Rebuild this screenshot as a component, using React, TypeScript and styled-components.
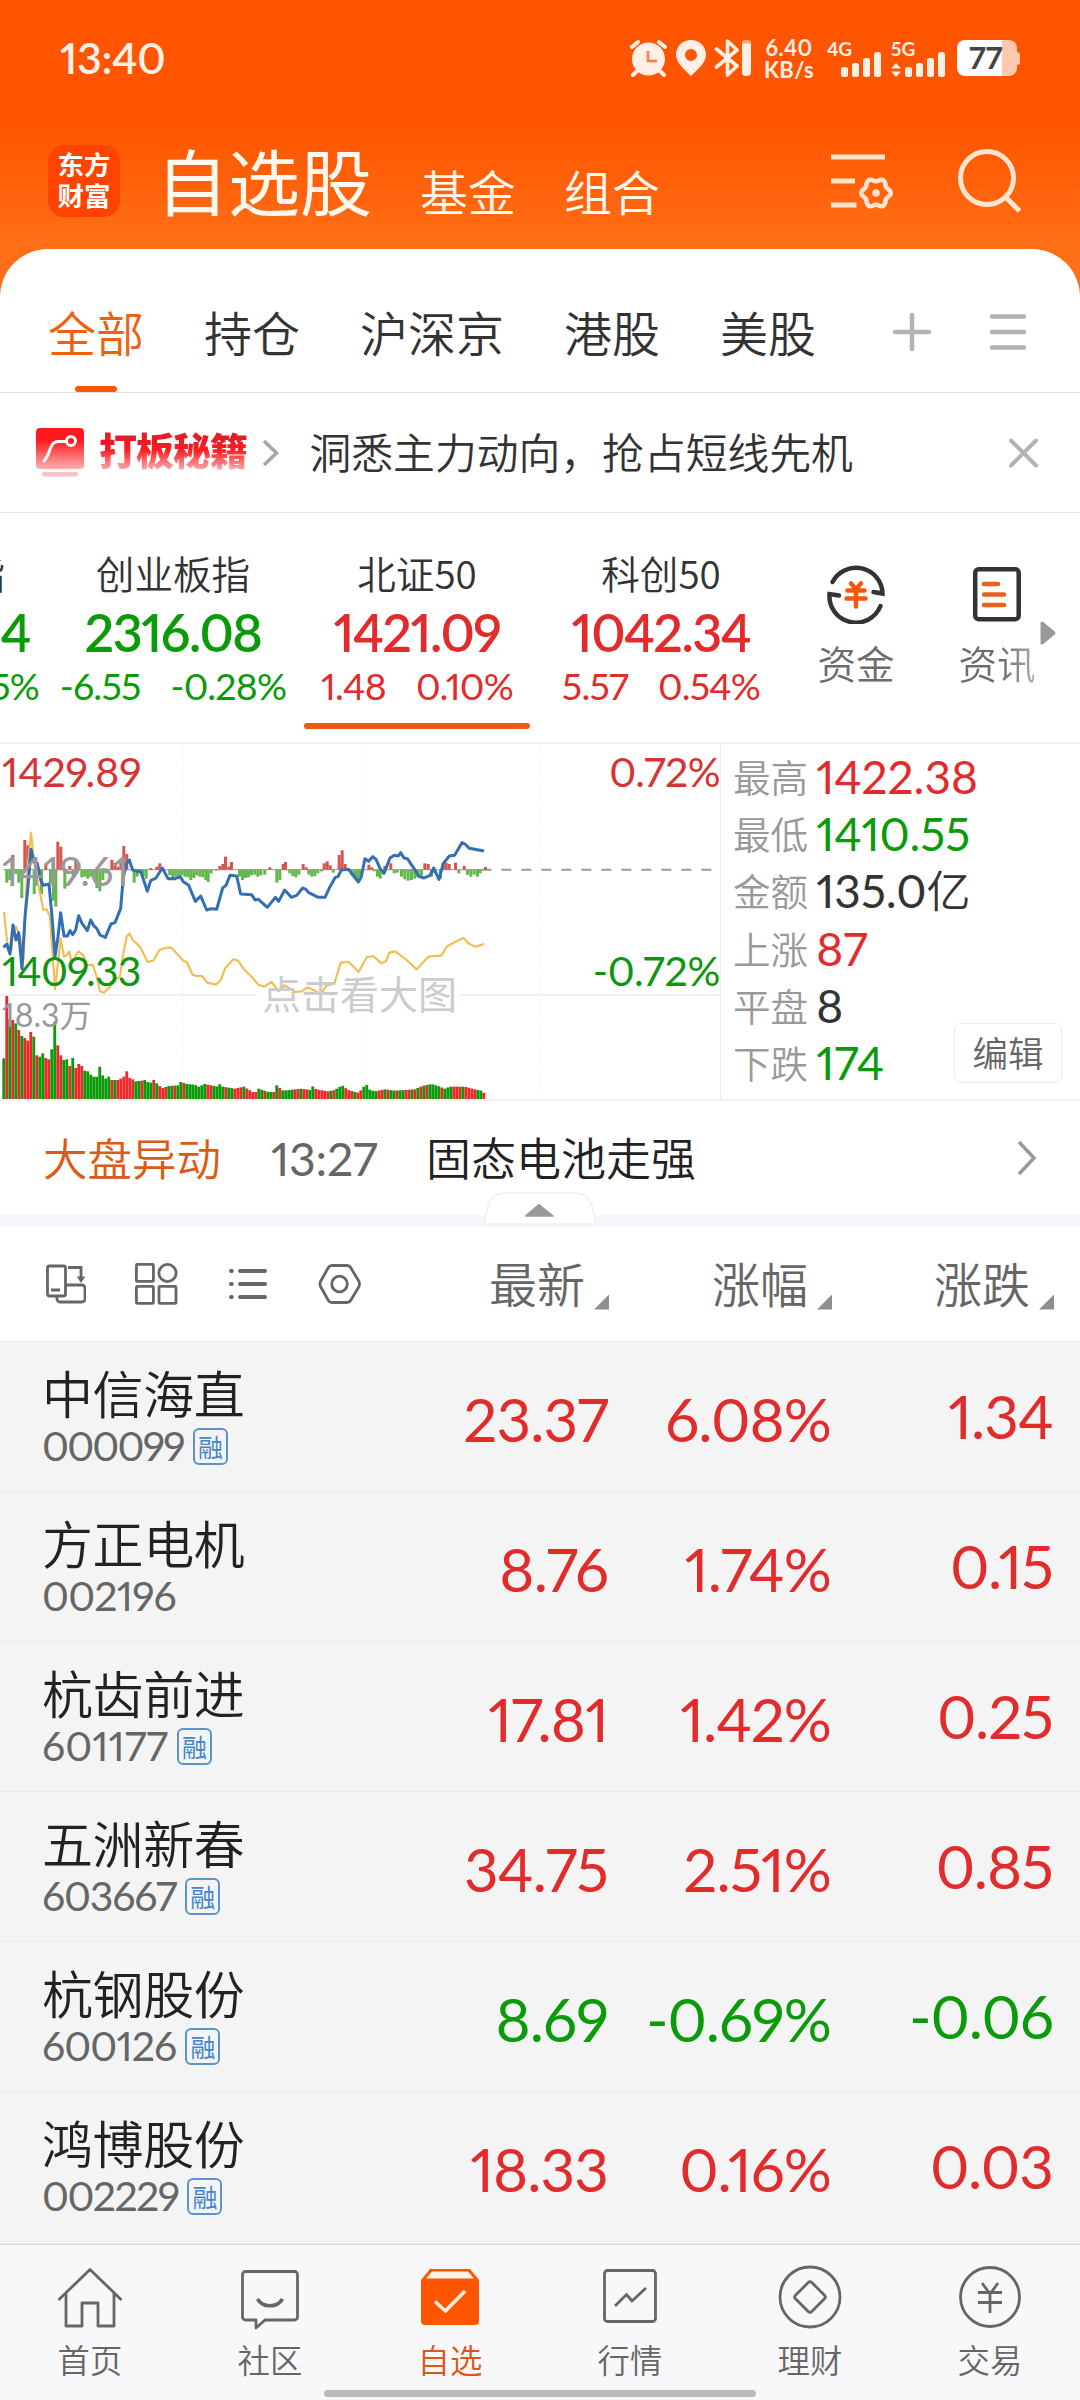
import React from "react";
import styled, { createGlobalStyle, css } from "styled-components";

const RED = "#e22b2b";
const GREEN = "#0a9a0a";
const ORANGE = "#ff5500";
const CJK = '"Noto Sans CJK SC", "Noto Sans", sans-serif';
const NUM = 'Lato, "Noto Sans CJK SC", sans-serif';

type Tone = "up" | "down" | "flat";
const toneColor: Record<Tone, string> = { up: RED, down: GREEN, flat: "#333" };

const Global = createGlobalStyle`
  html, body { margin: 0; padding: 0; background: #fff; }
  body { font-family: ${CJK}; font-weight: 350; color: #333; }
  * { box-sizing: border-box; }
  svg { display: block; flex: none; }
`;

const numeric = css`
  font-family: ${NUM};
  font-weight: 400;
  font-feature-settings: "pnum";
`;

const Screen = styled.div`
  width: 1080px;
  height: 2400px;
  overflow: hidden;
  display: flex;
  flex-direction: column;
  background: linear-gradient(180deg, ${ORANGE} 0, ${ORANGE} 128px, #ff6f17 245px, #ff6f17 320px, #fff 321px);
`;

/* ---------- status bar ---------- */

const StatusBar = styled.div`
  height: 116px;
  flex: none;
  padding: 0 60px 0 60px;
  display: flex;
  align-items: center;
  color: #ffefe6;
`;
const Clock = styled.div`
  ${numeric}
  font-size: 43px;
  font-weight: 600;
  line-height: 60px;
  letter-spacing: -0.4px;
  margin-right: auto;
  padding-bottom: 1px;
`;
const NetSpeed = styled.div`
  ${numeric}
  width: 50px;
  margin: 2px 0 0 12px;
  display: flex;
  flex-direction: column;
  align-items: center;
  font-size: 22px;
  font-weight: 700;
  line-height: 22px;
  letter-spacing: 0.4px;
  white-space: nowrap;
`;
const Signal = styled.div<{ $ml: number }>`
  ${numeric}
  position: relative;
  width: 56px;
  height: 37px;
  margin-left: ${(p) => p.$ml}px;
`;
const SignalTag = styled.span`
  position: absolute;
  left: 0;
  top: 0;
  font-size: 19px;
  font-weight: 700;
  line-height: 18px;
`;
const Battery = styled.div`
  display: flex;
  align-items: center;
  margin-left: 10px;
`;
const BatteryBody = styled.div`
  ${numeric}
  width: 60px;
  height: 36px;
  border-radius: 8px;
  background: linear-gradient(90deg, #fff 45px, #ffc8b0 45px);
  color: #444;
  font-size: 31px;
  font-weight: 700;
  line-height: 35px;
  padding-left: 12px;
`;
const BatteryNub = styled.div`
  width: 3px;
  height: 13px;
  border-radius: 0 3px 3px 0;
  background: #ffc8b0;
`;

/* ---------- app header ---------- */

const Header = styled.header`
  height: 133px;
  flex: none;
  padding: 0 59px 0 48px;
  display: flex;
  align-items: flex-start;
  color: #fff8ee;
`;
const Logo = styled.div`
  width: 72px;
  height: 72px;
  margin-top: 29px;
  border-radius: 16px;
  background: #ff4300;
  color: #fff;
  display: flex;
  flex-direction: column;
  align-items: center;
  padding-top: 3px;
  font-size: 26.5px;
  font-weight: 700;
  line-height: 31px;
`;
const Title = styled.h1`
  margin: 13px 0 0 36px;
  font-size: 72px;
  font-weight: 400;
  line-height: 100px;
`;
const HeaderLink = styled.a`
  margin: 44px 0 0 48px;
  font-size: 48px;
  font-weight: 350;
  line-height: 60px;
`;
const HeaderIcons = styled.div`
  margin: 32px 0 0 auto;
  display: flex;
  gap: 63px;
`;

/* ---------- sheet & tabs ---------- */

const Sheet = styled.main`
  flex: none;
  height: 1994px;
  background: #fff;
  border-radius: 48px 48px 0 0;
  overflow: hidden;
`;
const Tabs = styled.nav`
  height: 144px;
  padding: 0 53px 0 48px;
  display: flex;
  gap: 60px;
  border-bottom: 1px solid #e0e0e0;
`;
const Tab = styled.div<{ $active?: boolean }>`
  display: flex;
  flex-direction: column;
  align-items: center;
  height: 143px;
  padding-top: 52px;
  font-size: 48px;
  line-height: 60px;
  color: ${(p) => (p.$active ? "#f0600f" : "#333")};
  &::after {
    content: "";
    width: 42px;
    height: 6px;
    margin-top: auto;
    border-radius: 3px;
    background: ${(p) => (p.$active ? ORANGE : "transparent")};
  }
`;
const TabTools = styled.div`
  margin: 63px 0 0 auto;
  display: flex;
  gap: 57px;
`;

const Promo = styled.section`
  height: 120px;
  padding: 0 42px 0 36px;
  display: flex;
  align-items: center;
  border-bottom: 1px solid #e4e4e4;
`;
const PromoName = styled.b`
  margin: -7px 15px 0 15px;
  font-size: 38px;
  font-weight: 900;
  letter-spacing: -1px;
  line-height: 50px;
  background: linear-gradient(180deg, #e81c24 18px, #ff1c20 26px, #ffb4b4 47px);
  background-clip: text;
  -webkit-background-clip: text;
  color: transparent;
`;
const PromoText = styled.p`
  margin: -4px auto 0 29.5px;
  font-size: 41.8px;
  line-height: 60px;
`;

/* ---------- indices ---------- */

const Indices = styled.section`
  height: 229px;
  display: flex;
  overflow: hidden;
`;
const IndexCell = styled.div<{ $tone: Tone; $active?: boolean }>`
  width: 244px;
  flex: none;
  display: flex;
  flex-direction: column;
  align-items: center;
  color: ${(p) => toneColor[p.$tone]};
  white-space: nowrap;
  padding-top: 34px;
  &::after {
    content: "";
    width: 226px;
    height: 6px;
    margin-top: 13px;
    border-radius: 3px;
    background: ${(p) => (p.$active ? "#ee5a10" : "transparent")};
  }
`;
const ClippedCell = styled(IndexCell)`
  width: 51px;
  align-items: flex-end;
  padding-right: 12px;
`;
const IndexName = styled.div<{ $shift?: number }>`
  font-size: 38.6px;
  line-height: 50px;
  color: #333;
  margin-right: ${(p) => p.$shift ?? 0}px;
`;
const IndexValue = styled.div<{ $shift?: number }>`
  ${numeric}
  font-size: 52px;
  font-weight: 600;
  line-height: 64px;
  letter-spacing: -1.5px;
  margin-top: 3px;
  margin-right: ${(p) => p.$shift ?? 0}px;
`;
const IndexDelta = styled.div`
  ${numeric}
  display: flex;
  gap: 30px;
  font-size: 37.5px;
  line-height: 48px;
  letter-spacing: -0.8px;
  margin-top: -2px;
`;
const Shortcut = styled.div<{ $ml: number }>`
  display: flex;
  flex-direction: column;
  align-items: center;
  width: 78px;
  margin-left: ${(p) => p.$ml}px;
  padding-top: 51px;
  font-size: 38.6px;
  line-height: 50px;
  color: #6c6c6c;
`;
const ShortcutText = styled.span<{ $fade?: boolean }>`
  margin-top: 13px;
  ${(p) =>
    p.$fade &&
    css`
      background: linear-gradient(90deg, #6c6c6c 55%, #b0b0b0 100%);
      background-clip: text;
      -webkit-background-clip: text;
      color: transparent;
    `}
`;
const MoreArrow = styled.div`
  padding-top: 107px;
  margin-left: 4px;
`;

/* ---------- chart panel ---------- */

const Panel = styled.section`
  height: 359px;
  display: flex;
  border-top: 2px solid #f1f1f1;
  border-bottom: 2px solid #f1f1f1;
`;
const ChartBox = styled.div`
  position: relative;
  width: 721px;
  height: 355px;
  border-right: 1px solid #ececec;
`;
const ChartLabel = styled.span<{ $top: number; $right?: boolean; $color: string; $size?: number; $track?: number }>`
  ${numeric}
  position: absolute;
  top: ${(p) => p.$top}px;
  ${(p) => (p.$right ? "right: 0;" : "left: 2px;")}
  font-size: ${(p) => p.$size ?? 41}px;
  letter-spacing: ${(p) => p.$track ?? 0}px;
  line-height: 48px;
  color: ${(p) => p.$color};
`;
const ChartHint = styled.span`
  position: absolute;
  left: 258px;
  top: 222px;
  padding: 0 4px;
  font-size: 39px;
  line-height: 52px;
  font-weight: 400;
  color: #ccc;
`;
const Stats = styled.div`
  position: relative;
  flex: 1;
  padding: 4px 0 0 12px;
`;
const Stat = styled.div<{ $tone: Tone }>`
  height: 57.3px;
  display: flex;
  align-items: center;
  gap: 8px;
  color: ${(p) => toneColor[p.$tone]};
`;
const StatLabel = styled.span`
  font-size: 37.6px;
  line-height: 50px;
  color: #999;
  margin-top: -2px;
`;
const StatValue = styled.span`
  ${numeric}
  font-size: 46px;
  line-height: 56px;
  white-space: nowrap;
`;
const Unit = styled.span`
  font-family: ${CJK};
  font-weight: 350;
  font-size: 44px;
  line-height: 40px;
`;
const EditButton = styled.button`
  position: absolute;
  right: 18px;
  bottom: 16px;
  width: 108px;
  height: 60px;
  padding: 0 0 3px;
  border: 1px solid #ebebeb;
  border-radius: 7px;
  background: #fff;
  font-family: ${CJK};
  font-weight: 350;
  font-size: 35.5px;
  line-height: 50px;
  color: #666;
`;

/* ---------- news line ---------- */

const News = styled.section`
  position: relative;
  height: 114px;
  padding: 0 43px 0 43px;
  display: flex;
  align-items: center;
  font-size: 45px;
  line-height: 60px;
`;
const NewsTag = styled.span`
  width: 178px;
  font-size: 44.5px;
  color: #dc5a12;
  margin-top: -2px;
`;
const NewsTime = styled.span`
  ${numeric}
  font-size: 46.5px;
  letter-spacing: -0.3px;
  width: 107px;
  margin: -1px 0 0 50px;
  color: #666;
`;
const NewsText = styled.span`
  margin: -3px auto 0 48px;
  color: #222;
`;
const Band = styled.div`
  height: 12px;
  background: #f5f7fa;
`;
const Handle = styled.div`
  position: absolute;
  left: 483px;
  top: 91px;
`;

/* ---------- list ---------- */

const grid = css`
  display: grid;
  grid-template-columns: 343px 223px 223px 222px;
  padding-left: 42px;
`;
const ListHead = styled.div`
  ${grid}
  height: 115px;
  align-items: center;
  border-bottom: 1px solid #ebebeb;
`;
const ViewIcons = styled.div`
  display: flex;
  align-items: center;
  gap: 48px;
`;
const ColHead = styled.div`
  display: flex;
  justify-content: flex-end;
  gap: 9px;
  margin: -5px -1px 0 0;
  font-size: 48px;
  line-height: 60px;
  color: #666;
`;
const SortMark = styled.i`
  width: 15px;
  height: 15px;
  margin-top: 43px;
  background: #8e8e93;
  clip-path: polygon(100% 0, 100% 100%, 0 100%);
`;
const StockRow = styled.div<{ $tone: Tone }>`
  ${grid}
  height: 150px;
  background: #f4f4f4;
  border-bottom: 1px solid #eaeaea;
  color: ${(p) => toneColor[p.$tone]};
`;
const StockName = styled.div`
  margin-top: 15px;
  font-size: 51px;
  line-height: 70px;
  color: #222;
  letter-spacing: -0.4px;
`;
const StockCode = styled.div<{ $track: number }>`
  ${numeric}
  display: flex;
  align-items: center;
  gap: 9px;
  margin-top: -2px;
  font-size: 41px;
  line-height: 42px;
  letter-spacing: ${(p) => p.$track}px;
  color: #666;
`;
const Badge = styled.span`
  width: 35px;
  height: 37px;
  border: 2px solid #5c93cc;
  border-radius: 6px;
  font-family: ${CJK};
  font-size: 25px;
  line-height: 32px;
  letter-spacing: 0;
  text-align: center;
  color: #4586c8;
`;
const Figure = styled.div<{ $top: number }>`
  ${numeric}
  padding-top: ${(p) => p.$top}px;
  font-size: 60px;
  line-height: 72px;
  letter-spacing: -0.9px;
  text-align: right;
  white-space: nowrap;
`;

/* ---------- bottom bar ---------- */

const BottomBar = styled.footer`
  position: relative;
  flex: none;
  height: 157px;
  background: #f8f8fb;
  border-top: 2px solid #dedede;
  display: flex;
`;
const NavItem = styled.div<{ $active?: boolean }>`
  width: 180px;
  display: flex;
  flex-direction: column;
  align-items: center;
  padding-top: 19px;
  font-size: 32.4px;
  line-height: 44px;
  color: ${(p) => (p.$active ? "#d8571a" : "#666")};
`;
const NavText = styled.span`
  margin-top: 7px;
`;
const HomeIndicator = styled.div`
  position: absolute;
  left: 324px;
  bottom: 3px;
  width: 432px;
  height: 7px;
  border-radius: 4px;
  background: #bababa;
`;

/* ---------- data ---------- */

const PRICE =
  "10,652 20,643 30,672 39,585 48,630 56,608 66,716 75,560 84,470 93,358 102,395 112,400 122,450 130,466 147,462 156,560 165,680 174,620 182,548 192,618 202,618 210,602 218,614 227,600 236,557 246,580 262,602 272,570 282,588 290,595 300,615 316,622 333,582 345,578 362,535 370,440 380,400 388,390 398,420 412,424 422,424 442,484 452,452 468,444 487,414 504,446 525,446 541,440 550,455 566,466 586,514 602,498 620,540 634,536 650,538 668,474 678,466 690,436 710,438 722,492 755,494 765,510 775,508 802,532 826,502 836,514 854,480 874,502 890,496 908,474 918,478 926,488 955,502 975,502 990,470 1006,442 1014,440 1024,420 1046,418 1075,456 1084,440 1095,386 1106,394 1118,380 1128,388 1140,415 1152,430 1170,384 1183,376 1195,378 1202,368 1212,384 1222,386 1248,424 1255,438 1272,444 1290,436 1301,414 1317,448 1330,400 1348,378 1364,376 1386,338 1395,342 1408,355 1452,363";
const AVERAGE =
  "12,546 22,640 34,660 40,600 48,590 60,620 70,690 80,450 93,308 103,400 120,490 130,540 140,538 150,560 165,778 182,625 192,680 200,676 208,664 215,700 235,664 250,676 262,706 278,704 290,740 300,784 312,788 330,770 345,748 360,740 368,680 380,620 388,610 398,630 420,650 443,696 460,692 478,660 495,654 513,652 550,692 560,696 578,734 590,738 606,738 622,758 648,764 662,750 676,714 700,688 714,692 730,716 755,740 775,764 793,770 815,756 836,784 854,766 885,786 905,784 922,772 945,782 962,794 980,766 1003,760 1022,698 1046,696 1076,726 1100,682 1120,678 1144,700 1158,694 1168,668 1186,664 1220,690 1250,718 1285,680 1325,676 1340,650 1365,636 1390,624 1405,640 1425,650 1452,642";
const BASE = 419;
const INFLOW: number[][] = [[34,375],[70,330],[79,346],[133,402],[169,335],[178,350],[205,408],[223,392],[232,400],[331,390],[340,398],[349,410],[358,398],[367,348],[376,372],[448,414],[466,410],[475,400],[655,408],[664,402],[672,380],[682,410],[690,396],[805,412],[845,402],[852,396],[905,402],[914,412],[968,400],[977,394],[986,406],[1013,375],[1022,361],[1031,402],[1102,404],[1111,412],[1150,408],[1168,400],[1270,400],[1280,402],[1325,400],[1334,398],[1343,402],[1362,398],[1388,408],[1452,411]];
const OUTFLOW: number[][] = [[16,458],[25,450],[43,432],[52,458],[61,504],[98,492],[120,492],[147,460],[156,512],[163,530],[190,476],[215,440],[241,442],[250,440],[259,446],[268,440],[277,448],[286,474],[295,484],[304,450],[313,430],[398,458],[407,440],[416,430],[425,438],[434,446],[505,436],[514,446],[523,440],[532,446],[541,436],[550,440],[559,442],[568,450],[577,444],[586,436],[595,440],[604,442],[613,450],[620,456],[629,430],[645,422],[714,440],[723,450],[732,444],[741,442],[750,436],[760,434],[769,440],[778,436],[790,434],[826,458],[835,450],[865,430],[874,438],[883,442],[892,434],[922,434],[931,440],[940,438],[949,430],[960,424],[995,428],[1040,424],[1050,436],[1060,446],[1068,450],[1077,440],[1118,424],[1128,440],[1136,446],[1145,432],[1178,430],[1187,428],[1200,440],[1210,448],[1220,452],[1230,450],[1240,446],[1250,440],[1260,436],[1290,440],[1300,430],[1317,446],[1372,430],[1398,434],[1408,440],[1418,434],[1428,440],[1436,430]];
const VOLUME: number[][] = [[7,985],[16,798],[25,868],[34,870],[43,880],[52,900],[61,918],[70,924],[79,932],[88,906],[97,920],[106,976],[115,980],[124,970],[133,984],[142,988],[151,958],[160,875],[169,946],[178,976],[187,990],[196,988],[205,1008],[214,984],[223,1014],[232,1002],[241,1008],[250,1022],[259,1024],[268,1034],[277,1040],[286,1040],[295,1010],[304,1036],[313,1046],[322,1040],[331,1050],[349,1050],[358,1046],[367,1040],[376,1024],[385,1044],[394,1048],[403,1054],[421,1052],[430,1050],[439,1056],[448,1058],[457,1050],[466,1060],[475,1068],[484,1074],[502,1068],[529,1066],[538,1056],[556,1062],[580,1064],[592,1070],[610,1062],[630,1066],[645,1070],[654,1062],[664,1070],[700,1076],[727,1070],[754,1086],[763,1086],[772,1076],[800,1086],[818,1086],[826,1066],[845,1082],[900,1076],[926,1080],[935,1068],[944,1078],[980,1084],[1000,1080],[1022,1066],[1040,1080],[1070,1088],[1084,1076],[1093,1058],[1102,1078],[1120,1084],[1150,1078],[1180,1082],[1240,1078],[1262,1068],[1290,1062],[1310,1068],[1330,1076],[1345,1070],[1390,1070],[1420,1078],[1440,1082],[1456,1096]];
const VOLUME_SIDE =
  "grgrgrgrrrgrggrrggrrggrgrrrgggggggggrgrrrrrrggrgggrgrrrggrggrgggggggrrggggrggrrrgrrrrggrggrgrggggrrgrrggrrrrrgrgggrrrgrrgggggrrgrggrggrrgrgrgrggggrgggrrrgrrrrggrgrgr";

function topAt(x: number) {
  const i = VOLUME.findIndex((p) => p[0] >= x);
  if (i <= 0) return VOLUME[Math.max(i, 0)][1];
  const [x0, y0] = VOLUME[i - 1];
  const [x1, y1] = VOLUME[i];
  return y0 + ((y1 - y0) * (x - x0)) / (x1 - x0);
}

const VOLUME_BARS = Array.from({ length: 161 }, (_, i) => {
  const x = 7 + i * 9;
  return { x, y: topAt(x), up: VOLUME_SIDE[i % VOLUME_SIDE.length] === "r" };
});

const STATS: [string, string, Tone, string?][] = [
  ["最高", "1422.38", "up"],
  ["最低", "1410.55", "down"],
  ["金额", "135.0", "flat", "亿"],
  ["上涨", "87", "up"],
  ["平盘", "8", "flat"],
  ["下跌", "174", "down"],
];

type Stock = {
  name: string;
  code: string;
  track: number;
  margin: boolean;
  price: string;
  pct: string;
  diff: string;
  tone: Tone;
};
const STOCKS: Stock[] = [
  { name: "中信海直", code: "000099", track: -1.8, margin: true, price: "23.37", pct: "6.08%", diff: "1.34", tone: "up" },
  { name: "方正电机", code: "002196", track: -0.8, margin: false, price: "8.76", pct: "1.74%", diff: "0.15", tone: "up" },
  { name: "杭齿前进", code: "601177", track: 0, margin: true, price: "17.81", pct: "1.42%", diff: "0.25", tone: "up" },
  { name: "五洲新春", code: "603667", track: -1.2, margin: true, price: "34.75", pct: "2.51%", diff: "0.85", tone: "up" },
  { name: "杭钢股份", code: "600126", track: -0.9, margin: true, price: "8.69", pct: "-0.69%", diff: "-0.06", tone: "down" },
  { name: "鸿博股份", code: "002229", track: -1.6, margin: true, price: "18.33", pct: "0.16%", diff: "0.03", tone: "up" },
];

/* ---------- drawings ---------- */

const StatusIcons = () => (
  <svg width="122" height="38" viewBox="631 39 122 38" fill="#ffefe6">
    <circle cx="649.5" cy="59" r="16.5" />
    <path d="M633 47l6-5M660 42l6 5M638 71l-4 4M661 71l4 4" stroke="#ffefe6" strokeWidth="4" strokeLinecap="round" />
    <path d="M649 51v10h9" fill="none" stroke="#ff7a3d" strokeWidth="2.6" />
    <path d="M692 40c-8.500 0-15 6.500-15 14.600 0 9 9 15.400 15 21.400 6-6 15-12.400 15-21.400 0-8.100-6.500-14.600-15-14.600zm0 9a6 6 0 1 1 0 12 6 6 0 0 1 0-12z" fillRule="evenodd" />
    <path d="M717.500 49l20.500 17-9.500 9V41l9.500 9-20.500 17" fill="none" stroke="#ffefe6" strokeWidth="3.600" strokeLinejoin="round" strokeLinecap="round" />
    <rect x="743" y="40" width="9" height="36" rx="4" />
    <path d="M743 43.500c0-5 9-5 9 0z" fill="#ffa57a" />
  </svg>
);

const Bars = ({ arrows }: { arrows?: boolean }) => (
  <svg width="56" height="37" viewBox="0 0 56 37" fill="#ffefe6">
    {arrows && <path d="M5 23l5 5.500H0zM5 37l5-5.500H0z" />}
    {[27, 23, 18, 12].map((y, i) => (
      <rect key={y} x={14 + i * 11} y={y} width="7" height={37 - y} rx="2.500" />
    ))}
  </svg>
);

const gear = (() => {
  const pts: string[] = [];
  for (let a = 0; a <= 360; a += 4) {
    const t = (a * Math.PI) / 180;
    const r = 13.2 + 1.5 * Math.cos(6 * t);
    pts.push(`${(876 + r * Math.cos(t)).toFixed(1)},${(193 + r * Math.sin(t)).toFixed(1)}`);
  }
  return pts.join(" ");
})();

const ManageIcon = () => (
  <svg width="64" height="66" viewBox="830 148 64 66" fill="none" stroke="#ffe4cf" strokeWidth="5">
    <path d="M831 157h54M831 181h24M831 205h25.500" />
    <polygon points={gear} strokeWidth="4.500" strokeLinejoin="round" />
    <circle cx="876" cy="193" r="3.800" fill="#ffe4cf" stroke="none" />
  </svg>
);

const SearchIcon = () => (
  <svg width="64" height="66" viewBox="957 148 64 66" fill="none" stroke="#ffe4cf" strokeWidth="5">
    <circle cx="987" cy="178" r="26.500" />
    <path d="M1005.500 197l14 14" />
  </svg>
);

const FundIcon = () => (
  <svg width="60" height="60" viewBox="-30 -30 60 60" fill="none" stroke="#333" strokeWidth="4.500" strokeLinecap="round">
    <path d="M-23.500-12A26.500 26.500 0 0 1 26.500-.5L17.500-2" />
    <path d="M24.500 12A26.500 26.500 0 0 1-26.500 0L-17 1.500" />
    <path d="M-5-10.500L0-5l5-5.500M-8.500-3.500H8.500M-9.500 4.500H9.500M0-4V12.500" stroke="#f5580c" />
  </svg>
);

const NewsIcon = () => (
  <svg width="50" height="60" viewBox="0 -3 50 60" fill="none" stroke="#333" strokeWidth="4.500" strokeLinecap="round">
    <rect x="3.200" y="2.200" width="43.500" height="50" rx="3.500" />
    <path d="M12 17h14M12 27.500h20M12 38h20" stroke="#e8601a" />
  </svg>
);

const Chart = () => (
  <svg width="720" height="355" viewBox="0 42 2160 1065" fill="none">
    <path d="M549 42V1107M1086 42V1107M1623 42V1107" stroke="#efefef" strokeWidth="3" strokeDasharray="4 5" />
    <path d="M0 795H770M1380 795H2160" stroke="#ececec" strokeWidth="5" />
    <path d="M10 419H1472" stroke="#aaa" strokeWidth="4" />
    <path d="M1440 419H2140" stroke="#999" strokeWidth="6" strokeDasharray="30 30" strokeDashoffset="-4" />
    {INFLOW.map(([x, y]) => (
      <rect key={x} x={x} y={y} width="9" height={BASE - y} fill="#d9534f" />
    ))}
    {OUTFLOW.map(([x, y]) => (
      <rect key={x} x={x} y={BASE} width="9" height={y - BASE} fill="#62b84a" />
    ))}
    <polyline points={AVERAGE} stroke="#f0be55" strokeWidth="6.500" strokeLinejoin="round" />
    <polyline points={PRICE} stroke="#336fb3" strokeWidth="9" strokeLinejoin="round" />
    {VOLUME_BARS.map((b) => (
      <rect key={b.x} x={b.x} y={b.y} width="8.600" height={1108 - b.y} fill={b.up ? "#ea2b2b" : "#0a9a0a"} />
    ))}
  </svg>
);

const NavIcons: React.ReactNode[] = [
  <path d="M-31.500 3L0-27.500 31.500 3M-24-4V29H-8V6H8V29H24V-4" />,
  <>
    <path d="M-24.500-25.500H24.500a3 3 0 0 1 3 3V20a3 3 0 0 1-3 3H-5L-14 31V23H-24.500a3 3 0 0 1-3-3V-22.500a3 3 0 0 1 3-3z" />
    <path d="M-12.500 2C-7 11 7 11 12.500 2" strokeWidth="3.600" />
  </>,
  <>
    <path d="M-29-17L-20-28H20L29-17V24a4 4 0 0 1-4 4H-25a4 4 0 0 1-4-4z" fill={ORANGE} stroke="none" />
    <path d="M-24-18.500L-18-25.500H18L24-18.500z" fill="#fff3e8" stroke="none" />
    <path d="M-15 4.500L-4.500 14 15-6" stroke="#fff0dc" strokeWidth="3.600" />
  </>,
  <>
    <rect x="-25.500" y="-26.500" width="51" height="51" rx="3" />
    <path d="M-15 9L-3.500-2.500 2 4 16-9" />
  </>,
  <>
    <circle cx="0" cy="0" r="30" />
    <rect x="-11.500" y="-11.500" width="23" height="23" rx="2.500" transform="rotate(45)" />
  </>,
  <>
    <circle cx="0" cy="0" r="29.500" />
    <path d="M-8-14L0-3 8-14M-12-4.500H12M-12 5.500H12M0-4V16" />
  </>,
];
const NAV = ["首页", "社区", "自选", "行情", "理财", "交易"];

/* ---------- page ---------- */

export default function App() {
  return (
    <>
      <Global />
      <Screen>
        <StatusBar>
          <Clock>13:40</Clock>
          <StatusIcons />
          <NetSpeed>
            <span>6.40</span>
            <span>KB/s</span>
          </NetSpeed>
          <Signal $ml={13}>
            <SignalTag>4G</SignalTag>
            <Bars />
          </Signal>
          <Signal $ml={8}>
            <SignalTag>5G</SignalTag>
            <Bars arrows />
          </Signal>
          <Battery>
            <BatteryBody>77</BatteryBody>
            <BatteryNub />
          </Battery>
        </StatusBar>

        <Header>
          <Logo>
            <span>东方</span>
            <span>财富</span>
          </Logo>
          <Title>自选股</Title>
          <HeaderLink>基金</HeaderLink>
          <HeaderLink>组合</HeaderLink>
          <HeaderIcons>
            <ManageIcon />
            <SearchIcon />
          </HeaderIcons>
        </Header>

        <Sheet>
          <Tabs>
            <Tab $active>全部</Tab>
            <Tab>持仓</Tab>
            <Tab>沪深京</Tab>
            <Tab>港股</Tab>
            <Tab>美股</Tab>
            <TabTools>
              <svg width="40" height="40" viewBox="-20 -20 40 40" stroke="#b3b3b3" strokeWidth="4.500" strokeLinecap="round">
                <path d="M-17 0H17M0-17V17" />
              </svg>
              <svg width="38" height="40" viewBox="-19 -20 38 40" stroke="#b3b3b3" strokeWidth="4.500" strokeLinecap="round">
                <path d="M-16-15.500H16M-16 0H16M-16 15.500H16" />
              </svg>
            </TabTools>
          </Tabs>

          <Promo>
            <svg width="48" height="50" viewBox="0 0 48 50">
              <defs>
                <linearGradient id="promo" x1="0" y1="0" x2="0" y2="1">
                  <stop offset="0" stopColor="#ff1a1f" />
                  <stop offset="0.300" stopColor="#ff1a1f" />
                  <stop offset="1" stopColor="#ffb0b0" />
                </linearGradient>
              </defs>
              <rect width="48" height="41" rx="4" fill="url(#promo)" />
              <rect x="6" y="44" width="36" height="4.500" rx="2" fill="#f8c4c6" />
              <path d="M8 33C15 26 13 14 22 13.500H30" fill="none" stroke="#fff" strokeWidth="3" strokeLinecap="round" />
              <circle cx="35" cy="13" r="4.500" fill="none" stroke="#fff" strokeWidth="2.800" />
            </svg>
            <PromoName>打板秘籍</PromoName>
            <svg width="18" height="28" viewBox="0 0 18 28" fill="none" stroke="#a6a6a6" strokeWidth="3.600">
              <path d="M2 2L14.500 14 2 26" />
            </svg>
            <PromoText>洞悉主力动向，抢占短线先机</PromoText>
            <svg width="29" height="30" viewBox="0 0 29 30" fill="none" stroke="#b3b3b3" strokeWidth="4" strokeLinecap="round">
              <path d="M2 2.500L27 27.500M27 2.500L2 27.500" />
            </svg>
          </Promo>

          <Indices>
            <ClippedCell $tone="down">
              <IndexName $shift={34}>指</IndexName>
              <IndexValue $shift={9}>4</IndexValue>
              <IndexDelta>5%</IndexDelta>
            </ClippedCell>
            <IndexCell $tone="down">
              <IndexName>创业板指</IndexName>
              <IndexValue>2316.08</IndexValue>
              <IndexDelta>
                <span>-6.55</span>
                <span>-0.28%</span>
              </IndexDelta>
            </IndexCell>
            <IndexCell $tone="up" $active>
              <IndexName>北证50</IndexName>
              <IndexValue>1421.09</IndexValue>
              <IndexDelta>
                <span>1.48</span>
                <span>0.10%</span>
              </IndexDelta>
            </IndexCell>
            <IndexCell $tone="up">
              <IndexName>科创50</IndexName>
              <IndexValue>1042.34</IndexValue>
              <IndexDelta>
                <span>5.57</span>
                <span>0.54%</span>
              </IndexDelta>
            </IndexCell>
            <Shortcut $ml={34}>
              <FundIcon />
              <ShortcutText>资金</ShortcutText>
            </Shortcut>
            <Shortcut $ml={63}>
              <NewsIcon />
              <ShortcutText $fade>资讯</ShortcutText>
            </Shortcut>
            <MoreArrow>
              <svg width="17" height="26" viewBox="0 0 17 26">
                <path d="M2 3L14 13 2 23z" fill="#999" stroke="#999" strokeWidth="3" strokeLinejoin="round" />
              </svg>
            </MoreArrow>
          </Indices>

          <Panel>
            <ChartBox>
              <Chart />
              <ChartLabel $top={4} $color="#d63333">1429.89</ChartLabel>
              <ChartLabel $top={4} $right $color="#d63333" $track={-0.6}>0.72%</ChartLabel>
              <ChartLabel $top={103} $color="#999" $track={0.4}>1419.61</ChartLabel>
              <ChartLabel $top={203} $color="#109510" $track={-0.9}>1409.33</ChartLabel>
              <ChartLabel $top={203} $right $color="#109510" $track={-0.3}>-0.72%</ChartLabel>
              <ChartLabel $top={247} $color="#999" $size={32}>18.3万</ChartLabel>
              <ChartHint>点击看大图</ChartHint>
            </ChartBox>
            <Stats>
              {STATS.map(([label, value, tone, unit]) => (
                <Stat key={label} $tone={tone}>
                  <StatLabel>{label}</StatLabel>
                  <StatValue>
                    {value}
                    {unit && <Unit>{unit}</Unit>}
                  </StatValue>
                </Stat>
              ))}
              <EditButton>编辑</EditButton>
            </Stats>
          </Panel>

          <News>
            <NewsTag>大盘异动</NewsTag>
            <NewsTime>13:27</NewsTime>
            <NewsText>固态电池走强</NewsText>
            <svg width="20" height="36" viewBox="0 0 20 36" fill="none" stroke="#999" strokeWidth="3.500">
              <path d="M2 2L17 18 2 34" />
            </svg>
            <Handle>
              <svg width="114" height="34" viewBox="0 0 114 34">
                <path d="M1 32L5 14Q9 1 22 1H92Q105 1 109 14L113 32z" fill="#fff" stroke="#efefef" strokeWidth="1.500" />
                <path d="M42.500 24L56 12.500 70 24z" fill="#999" stroke="#999" strokeLinejoin="round" strokeWidth="1.500" />
              </svg>
            </Handle>
          </News>
          <Band />

          <ListHead>
            <ViewIcons>
              <svg width="44" height="42" viewBox="-2 -21 44 42" fill="none" stroke="#666" strokeWidth="2.800">
                <rect x="3.500" y="-18" width="18" height="30" rx="2" />
                <path d="M8 6h9M14 12v3a3 3 0 0 0 3 3H39a3 3 0 0 0 3-3V4a3 3 0 0 0-3-3H22M25-16.500H38V-6" transform="translate(-1 0)" />
                <path d="M32.800-7.500H41.300L37-1z" fill="#666" stroke="none" />
              </svg>
              <svg width="44" height="42" viewBox="0 0 44 42" fill="none" stroke="#666" strokeWidth="2.800">
                <rect x="2.400" y="1.400" width="17" height="17" rx="1" />
                <circle cx="33.500" cy="10" r="8.600" />
                <rect x="2.400" y="23.400" width="17" height="17" rx="1" />
                <rect x="25" y="23.400" width="17" height="17" rx="1" />
              </svg>
              <svg width="44" height="42" viewBox="0 0 44 42" stroke="#666" strokeWidth="4" strokeLinecap="round">
                <path d="M5 8h.8M5 21h.8M5 34h.8M14 8H39M14 21H39M14 34H39" />
              </svg>
              <svg width="44" height="42" viewBox="0 0 44 42" fill="none" stroke="#666" strokeWidth="2.800" strokeLinejoin="round">
                <path d="M14 2.500H29Q31.500 2.500 32.600 4.500L41 18.500Q42 21 41 23.500L32.600 37.500Q31.500 39.500 29 39.500H14Q11.500 39.500 10.400 37.500L2.500 23.500Q1.500 21 2.500 18.500L10.400 4.500Q11.500 2.500 14 2.500z" />
                <circle cx="21.500" cy="21" r="7.800" />
              </svg>
            </ViewIcons>
            {["最新", "涨幅", "涨跌"].map((t) => (
              <ColHead key={t}>
                {t}
                <SortMark />
              </ColHead>
            ))}
          </ListHead>

          {STOCKS.map((s) => (
            <StockRow key={s.code} $tone={s.tone}>
              <div>
                <StockName>{s.name}</StockName>
                <StockCode $track={s.track}>
                  {s.code}
                  {s.margin && <Badge>融</Badge>}
                </StockCode>
              </div>
              <Figure $top={41}>{s.price}</Figure>
              <Figure $top={41}>{s.pct}</Figure>
              <Figure $top={38}>{s.diff}</Figure>
            </StockRow>
          ))}
        </Sheet>

        <BottomBar>
          {NAV.map((label, i) => (
            <NavItem key={label} $active={i === 2}>
              <svg width="66" height="66" viewBox="-33 -33 66 66" fill="none" stroke="#666" strokeWidth="2.800" strokeLinejoin="round">
                {NavIcons[i]}
              </svg>
              <NavText>{label}</NavText>
            </NavItem>
          ))}
          <HomeIndicator />
        </BottomBar>
      </Screen>
    </>
  );
}
